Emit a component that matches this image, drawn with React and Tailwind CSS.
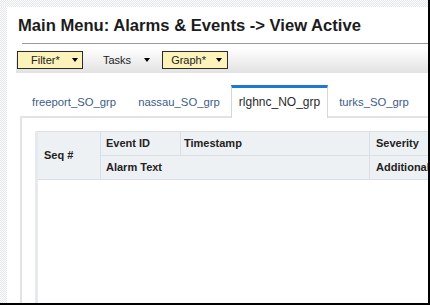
export default function App() {
  const dotted =
    "bg-[repeating-conic-gradient(#e2e6ea_0_25%,#ffffff_0_50%)] bg-[length:2px_2px]";
  const Arrow = () => (
    <span className="inline-block w-0 h-0 border-x-[3.5px] border-x-transparent border-t-[4px] border-t-black" />
  );
  return (
    <div className="w-[430px] h-[305px] overflow-hidden bg-white border-r-2 border-b-2 border-black flex flex-col font-['Liberation_Sans',Arial,sans-serif]">
      <div className={`h-[7px] shrink-0 ${dotted}`} />
      <div className="flex flex-1 min-h-0">
        <div className={`w-[7px] shrink-0 ${dotted}`} />
        <div className="flex-1 min-w-0 flex flex-col">
          <h1 className="mt-[9px] ml-[11px] text-[16.6px] leading-[19px] font-bold text-[#1c1c1c] whitespace-nowrap">
            Main Menu: Alarms &amp; Events -&gt; View Active
          </h1>
          <div className="mt-[8px] ml-[15px] h-px bg-[#9a9a9a]" />
          <div className="mt-[4px] ml-[9px] h-[25px] pt-[3px] pl-[1px] flex items-start bg-linear-to-b from-white to-[#e2e2e2] text-[11px] text-[#222]">
            <div className="w-[66px] h-[18px] border border-[#2b2b2b] bg-[#fbf3b9] pl-[13px] pr-[4px] flex items-center justify-between">
              <span>Filter*</span>
              <Arrow />
            </div>
            <div className="h-[18px] ml-[20px] flex items-center">
              <span>Tasks</span>
              <span className="ml-[13px] flex"><Arrow /></span>
            </div>
            <div className="ml-[12px] w-[66px] h-[18px] border border-[#2b2b2b] bg-[#fbf3b9] pl-[8px] pr-[5px] flex items-center justify-between">
              <span>Graph*</span>
              <Arrow />
            </div>
          </div>
          <div className="mt-[12px] ml-[14px] flex items-start relative z-10 whitespace-nowrap">
            <div className="h-[31px] border-t-[3px] border-t-transparent border-x border-x-transparent px-[10px] flex items-center text-[11.3px] text-[#3d5d86]">
              freeport_SO_grp
            </div>
            <div className="h-[31px] border-t-[3px] border-t-transparent border-x border-x-transparent px-[10px] flex items-center text-[11.3px] text-[#3d5d86]">
              nassau_SO_grp
            </div>
            <div className="h-[33px] pb-[2px] border-t-[3px] border-t-[#1b7ad2] border-x border-x-[#d8d8d8] bg-white px-[7px] flex items-center text-[12px] text-[#2a2a2a]">
              rlghnc_NO_grp
            </div>
            <div className="h-[31px] border-t-[3px] border-t-transparent border-x border-x-transparent px-[10px] flex items-center text-[11.3px] text-[#3d5d86]">
              turks_SO_grp
            </div>
          </div>
          <div className="-mt-[2px] ml-[13px] flex-1 border-t-2 border-l-2 border-[#e3e3e3] pl-[13px] pt-[13px] flex flex-col min-h-0">
            <div className="flex-1 border-l-[3px] border-[#e6eaee] flex flex-col">
              <div className="grid grid-cols-[63px_80px_189px_1fr] grid-rows-[24px_23px] bg-[#eef1f4] border-t border-b border-[#d9dfe4] text-[11px] font-bold text-[#222] whitespace-nowrap">
                <div className="row-span-2 border-r border-[#d9dfe4] px-[6px] flex items-center">Seq #</div>
                <div className="border-r border-b border-[#d9dfe4] px-[5px] flex items-center">Event ID</div>
                <div className="border-r border-b border-[#d9dfe4] px-[3px] flex items-center">Timestamp</div>
                <div className="border-b border-[#d9dfe4] px-[6px] flex items-center overflow-hidden">Severity</div>
                <div className="col-span-2 border-r border-[#d9dfe4] px-[5px] flex items-center">Alarm Text</div>
                <div className="px-[6px] flex items-center overflow-hidden">Additional</div>
              </div>
              <div className="flex-1 bg-white" />
            </div>
          </div>
        </div>
      </div>
    </div>
  );
}
